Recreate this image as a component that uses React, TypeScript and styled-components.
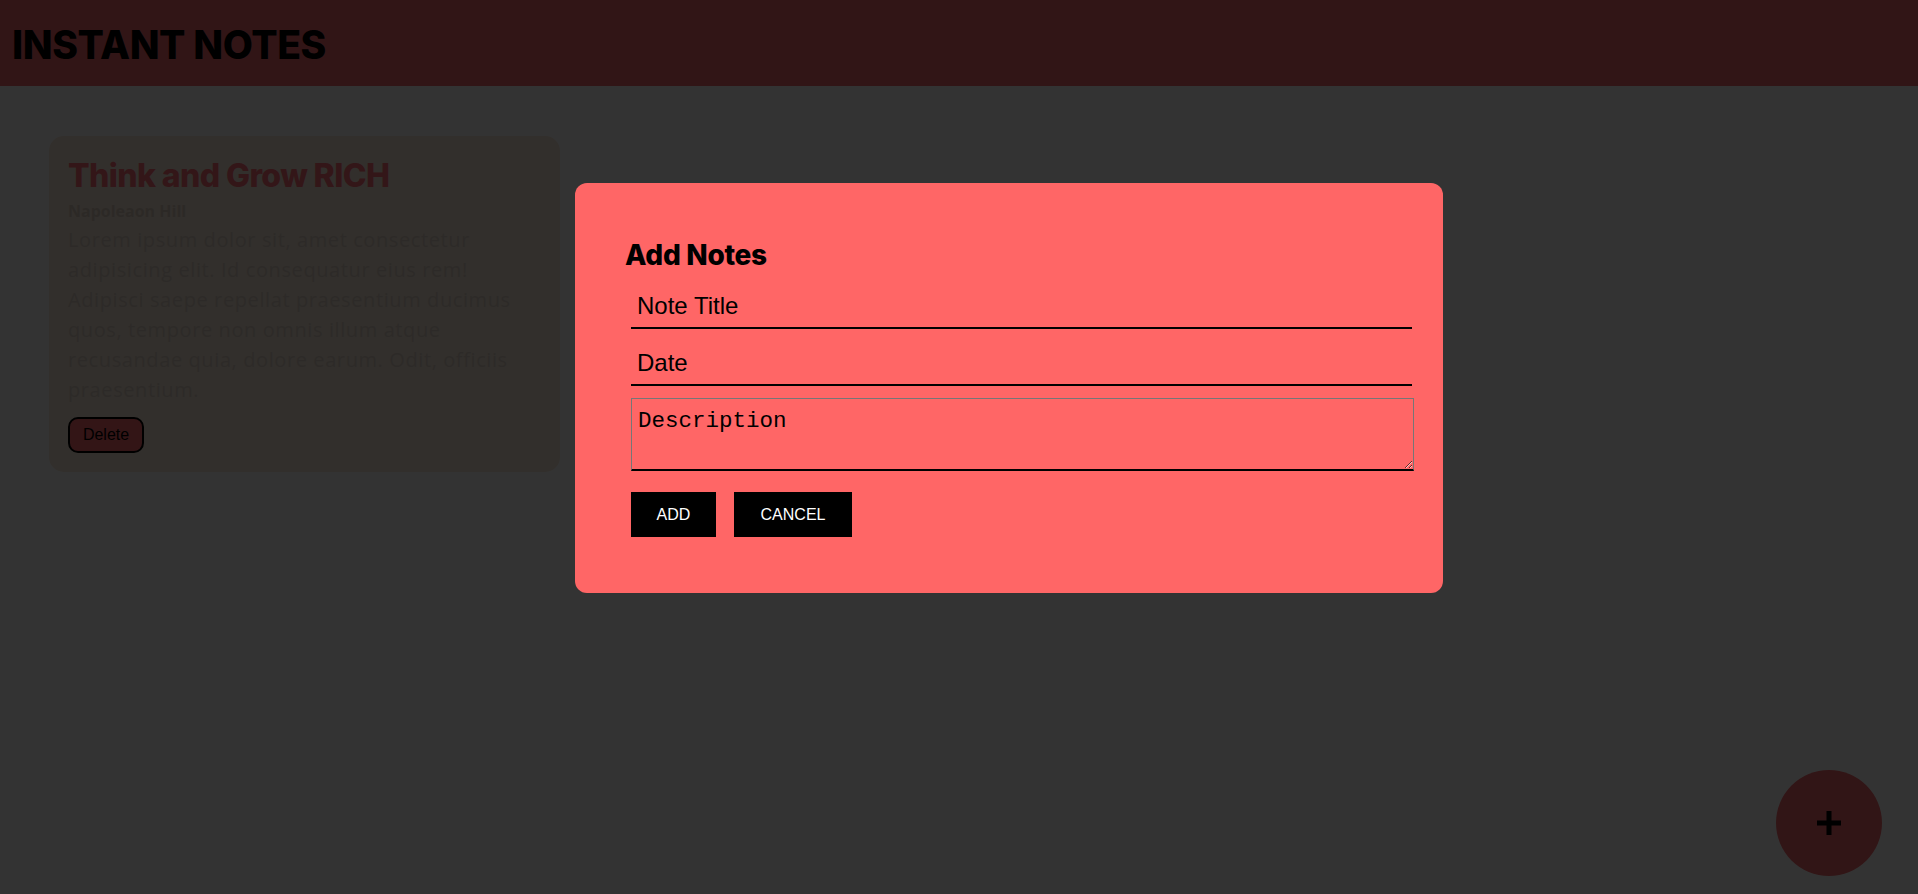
import React from "react";
import styled, { createGlobalStyle } from "styled-components";

const GlobalStyle = createGlobalStyle`
  html, body {
    margin: 0;
    padding: 0;
    background: #ffffff;
    font-family: "Inter", "Liberation Sans", sans-serif;
  }
  * { box-sizing: border-box; }
`;

const Page = styled.div`
  min-height: 894px;
  background: #ffffff;
`;

const Header = styled.header`
  height: 86px;
  background: #f56a6e;
  display: flex;
  align-items: center;
  padding-left: 12px;
`;

const Brand = styled.h1`
  margin: 2px 0 0 0;
  font-family: "Inter", sans-serif;
  font-weight: 800;
  font-size: 39px;
  line-height: 1;
  color: #000;
  letter-spacing: -0.4px;
`;

const Main = styled.main`
  padding: 50px 0 0 49px;
  display: flex;
  flex-wrap: wrap;
  gap: 24px;
`;

const Card = styled.article`
  width: 511px;
  background: #faeada;
  border-radius: 15px;
  padding: 21px 19px 19px 19px;
  display: flex;
  flex-direction: column;
  align-items: flex-start;
`;

const CardTitle = styled.h2`
  margin: 0;
  font-family: "Inter", sans-serif;
  font-weight: 800;
  font-size: 32px;
  line-height: 38px;
  color: #ff6e78;
  letter-spacing: -0.6px;
`;

const Author = styled.h4`
  margin: 4px 0 0 0;
  font-family: "Open Sans", sans-serif;
  font-weight: 700;
  font-size: 16px;
  line-height: 24px;
  color: #ddcdbf;
`;

const Body = styled.p`
  margin: 2px 0 0 0;
  font-family: "Open Sans", sans-serif;
  font-weight: 400;
  font-size: 20px;
  line-height: 30px;
  letter-spacing: 0.6px;
  color: #e0d3c7;
  max-width: 473px;
`;

const DeleteButton = styled.button`
  margin-top: 12px;
  width: 76px;
  height: 36px;
  background: #ff6a70;
  border: 2px solid #000;
  border-radius: 10px;
  font-family: "Liberation Sans", Arial, sans-serif;
  font-size: 16px;
  color: #000;
  padding: 0;
`;

const Fab = styled.button`
  position: fixed;
  right: 36px;
  bottom: 18px;
  width: 106px;
  height: 106px;
  border-radius: 50%;
  border: none;
  background: #f56a6e;
  display: flex;
  align-items: center;
  justify-content: center;
  padding: 0;
`;

const Overlay = styled.div`
  position: fixed;
  inset: 0;
  background: rgba(0, 0, 0, 0.8);
`;

const Modal = styled.div`
  position: fixed;
  top: 183px;
  left: 575px;
  width: 868px;
  height: 410px;
  background: #ff6666;
  border-radius: 12px;
  padding: 55px 29px 0 50px;
`;

const ModalTitle = styled.h3`
  margin: 0;
  font-family: "Inter", sans-serif;
  font-weight: 800;
  font-size: 28px;
  line-height: 34px;
  color: #000;
  letter-spacing: -0.3px;
`;

const Form = styled.form`
  margin: 12px 0 0 6px;
  display: flex;
  flex-direction: column;
  gap: 12px;
`;

const TextInput = styled.input`
  width: 781px;
  height: 45px;
  border: none;
  border-bottom: 2px solid #000;
  background: transparent;
  font-family: "Liberation Sans", Arial, sans-serif;
  font-size: 24px;
  padding: 8px 6px;
  color: #000;
  outline: none;
  &::placeholder { color: #000; opacity: 1; }
`;

const TextArea = styled.textarea`
  width: 783px;
  height: 73px;
  border: 1px solid #767676;
  border-bottom: 2px solid #000;
  background: transparent;
  font-family: "Liberation Mono", monospace;
  font-size: 22.5px;
  padding: 9px 6px 5px 6px;
  color: #000;
  outline: none;
  resize: vertical;
  &::placeholder { color: #000; opacity: 1; }
`;

const Actions = styled.div`
  display: flex;
  gap: 18px;
  margin-top: 9px;
`;

const ActionButton = styled.button<{ $w: number }>`
  width: ${(p) => p.$w}px;
  height: 45px;
  background: #000;
  color: #fff;
  border: none;
  font-family: "Liberation Sans", Arial, sans-serif;
  font-size: 16px;
  padding: 0;
  text-transform: uppercase;
`;

export default function App() {
  return (
    <>
      <GlobalStyle />
      <Page>
        <Header>
          <Brand>INSTANT NOTES</Brand>
        </Header>
        <Main>
          <Card>
            <CardTitle>Think and Grow RICH</CardTitle>
            <Author>Napoleaon Hill</Author>
            <Body>
              Lorem ipsum dolor sit, amet consectetur adipisicing elit. Id consequatur eius rem!
              Adipisci saepe repellat praesentium ducimus quos, tempore non omnis illum atque
              recusandae quia, dolore earum. Odit, officiis praesentium.
            </Body>
            <DeleteButton>Delete</DeleteButton>
          </Card>
        </Main>
        <Fab aria-label="Add note">
          <svg width="26" height="26" viewBox="0 0 26 26">
            <path d="M13 1v24M1 13h24" stroke="#000" strokeWidth="5" fill="none" />
          </svg>
        </Fab>
        <Overlay />
        <Modal>
          <ModalTitle>Add Notes</ModalTitle>
          <Form onSubmit={(e) => e.preventDefault()}>
            <TextInput placeholder="Note Title" />
            <TextInput placeholder="Date" />
            <TextArea placeholder="Description" />
            <Actions>
              <ActionButton $w={85} type="submit">Add</ActionButton>
              <ActionButton $w={118} type="button">Cancel</ActionButton>
            </Actions>
          </Form>
        </Modal>
      </Page>
    </>
  );
}
